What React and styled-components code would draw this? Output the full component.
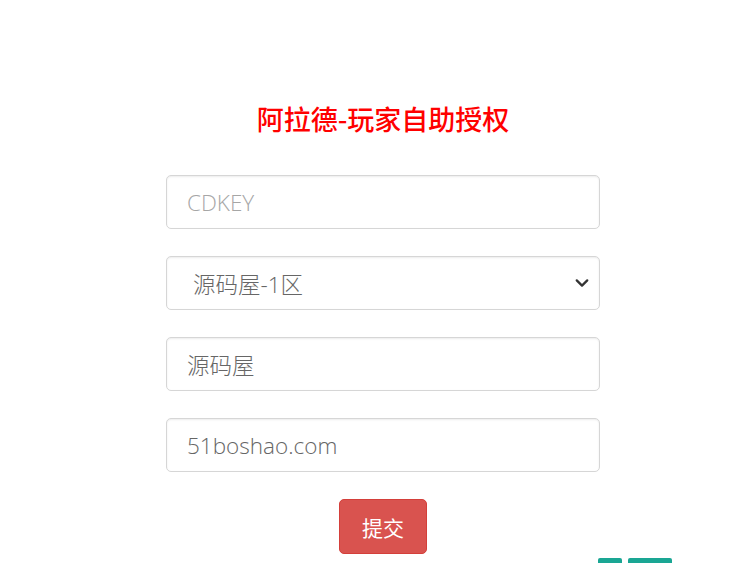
import React from "react";
import styled, { createGlobalStyle } from "styled-components";

const Global = createGlobalStyle`
  html, body { margin: 0; padding: 0; background: #fff; }
  body { font-family: "Noto Sans CJK SC", "Open Sans", sans-serif; }
  * { box-sizing: border-box; }
`;

const Page = styled.div`
  width: 754px;
  height: 563px;
  overflow: hidden;
  position: relative;
  padding-top: 97px;
`;

const Form = styled.form`
  width: 434px;
  margin-left: 166px;
  display: flex;
  flex-direction: column;
  align-items: center;
`;

const Title = styled.h1`
  margin: 0 0 34px;
  color: #f00;
  font-size: 27px;
  font-weight: 500;
  line-height: 44px;
  font-family: "Noto Sans CJK SC", sans-serif;
`;

const Field = styled.div`
  width: 100%;
  height: 54px;
  margin-bottom: 27px;
  border: 1px solid #d6d6d6;
  border-radius: 5px;
  box-shadow: inset 0 1px 2px rgba(0, 0, 0, 0.08);
  display: flex;
  align-items: center;
  padding: 0 ${(p) => (p.$select ? "6px 0 26px" : "20px")};
  font-family: "Open Sans", "Noto Sans CJK SC", sans-serif;
  font-size: 22.5px;
  color: ${(p) => (p.$placeholder ? "#a6a6a6" : "#666")};
  font-weight: 300;
  justify-content: space-between;
`;

const Text = styled.span``;

const Chevron = styled.svg`
  width: 14px;
  height: 14px;
  margin-right: 4px;
`;

const Button = styled.button`
  width: 88px;
  height: 55px;
  border: 1px solid #d43f3a;
  border-radius: 5px;
  background: #d9534f;
  color: #fff;
  font-size: 21px;
  font-family: "Noto Sans CJK SC", sans-serif;
  padding: 0;
`;

const Widget = styled.div`
  position: absolute;
  left: 598px;
  bottom: 0;
  display: flex;
  gap: 6px;
`;

const Bar = styled.div`
  width: ${(p) => p.$w}px;
  height: 5px;
  background: #1aa694;
  border-radius: 2px 2px 0 0;
`;

export default function App() {
  return (
    <>
      <Global />
      <Page>
        <Form onSubmit={(e) => e.preventDefault()}>
          <Title>阿拉德-玩家自助授权</Title>
          <Field $placeholder>
            <Text>CDKEY</Text>
          </Field>
          <Field $select>
            <Text>源码屋-1区</Text>
            <Chevron viewBox="0 0 16 16">
              <path d="M2 5l6 6 6-6" fill="none" stroke="#333" strokeWidth="2.6" strokeLinecap="round" strokeLinejoin="round" />
            </Chevron>
          </Field>
          <Field>
            <Text>源码屋</Text>
          </Field>
          <Field>
            <Text>51boshao.com</Text>
          </Field>
          <Button type="submit">提交</Button>
        </Form>
        <Widget>
          <Bar $w={24} />
          <Bar $w={44} />
        </Widget>
      </Page>
    </>
  );
}
